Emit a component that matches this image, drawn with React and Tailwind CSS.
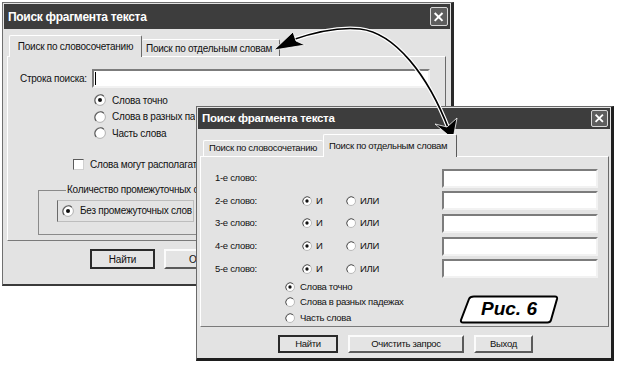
const FONT = { fontFamily: '"Liberation Sans", Arial, sans-serif' };

function Radio({ checked, s = 12 }) {
  return (
    <svg width={s} height={s} viewBox="0 0 12 12" className="shrink-0">
      <circle cx="6" cy="6" r="5.4" fill="#ffffff" stroke="#b0b0b0" strokeWidth="1" />
      <path d="M2.2 9.8 A5.4 5.4 0 0 1 9.8 2.2" fill="none" stroke="#5a5a5a" strokeWidth="1.2" />
      {checked && <circle cx="6" cy="6" r="2" fill="#111" />}
    </svg>
  );
}

function Close({ size }) {
  return (
    <div
      className={`${size} shrink-0 flex items-center justify-center border border-[#d8d8d8] bg-[#5e5e5e] rounded-[2px]`}
    >
      <svg viewBox="0 0 10 10" className="w-[70%] h-[70%]">
        <path d="M1.5 1.5 L8.5 8.5 M8.5 1.5 L1.5 8.5" stroke="#ffffff" strokeWidth="1.8" />
      </svg>
    </div>
  );
}

function Input({ className = "", children }) {
  return (
    <div
      className={`bg-white border-2 border-t-[#7c7c7c] border-l-[#7c7c7c] border-b-[#f2f2f2] border-r-[#f2f2f2] ${className}`}
    >
      {children}
    </div>
  );
}

function Btn({ children, def, className = "" }) {
  return (
    <div
      className={`flex items-center justify-center bg-[#e4e4e4] ${
        def
          ? "border-2 border-[#2a2a2a]"
          : "border-2 border-t-[#fbfbfb] border-l-[#fbfbfb] border-b-[#5a5a5a] border-r-[#5a5a5a]"
      } ${className}`}
    >
      {children}
    </div>
  );
}

function Dialog1() {
  return (
    <div
      className="absolute left-[2px] top-[2px] w-[452px] h-[284px] bg-[#e3e3e3] border border-[#707070] border-r-[3px] border-r-[#2a2a2a] border-b-[2px] border-b-[#3a3a3a] text-[10px] tracking-[-0.25px] text-[#111] overflow-hidden whitespace-nowrap"
      style={FONT}
    >
      <div className="mx-[1px] mt-[1px] h-[25px] bg-[#3d3d3d] flex items-center justify-between pl-[4px] pr-[2px]">
        <span className="text-white font-bold text-[12px] tracking-[-0.3px]">Поиск фрагмента текста</span>
        <Close size="w-[18px] h-[19px]" />
      </div>
      <div className="px-[4px] pt-[6px]">
        <div className="flex items-end h-[21px] pl-[2px]">
          <div className="relative z-10 h-[22px] w-[133px] -mb-[1px] bg-[#e3e3e3] border-t border-l border-white border-r border-r-[#6a6a6a] rounded-t-[2px] flex items-center justify-center">
            Поиск по словосочетанию
          </div>
          <div className="h-[17px] w-[138px] bg-[#e3e3e3] border-t border-white border-r border-r-[#6a6a6a] rounded-t-[2px] flex items-center pl-[4px]">
            Поиск по отдельным словам
          </div>
        </div>
        <div className="h-[185px] w-[439px] border border-t-white border-l-white border-b-[#7a7a7a] border-r-[#6a6a6a] flex flex-col">
          <div className="mt-[12px] h-[19px] flex items-center pl-[12px]">
            <span className="w-[72px]">Строка поиска:</span>
            <Input className="w-[338px] h-[19px] flex items-center pl-[1px]">
              <div className="w-[1px] h-[13px] bg-black" />
            </Input>
          </div>
          <div className="mt-[4px] flex flex-col pl-[86px]">
            {[["Слова точно", true], ["Слова в разных падежах", false], ["Часть слова", false]].map(
              ([t, c]) => (
                <div key={t} className="h-[16.5px] flex items-center gap-[6px]">
                  <Radio checked={c} s={12} />
                  <span className="w-[83px] overflow-hidden">{t}</span>
                </div>
              )
            )}
          </div>
          <div className="mt-[16px] h-[14px] flex items-center pl-[65px] gap-[6px]">
            <div className="w-[11px] h-[11px] bg-white border border-t-[#5a5a5a] border-l-[#5a5a5a] border-b-[#d0d0d0] border-r-[#d0d0d0]" />
            <span>Слова могут располагаться в любом порядке</span>
          </div>
          <div className="relative mt-[18px] ml-[30px] w-[392px] h-[45px] border border-[#8a8a8a]">
            <span className="absolute -top-[7px] left-[27px] bg-[#e3e3e3] px-[1px] leading-[12px]">
              Количество промежуточных слов
            </span>
            <div className="mt-[9px] ml-[18px] w-[137px] h-[22px] border border-t-[#bdbdbd] border-l-[#6a6a6a] border-b-[#bdbdbd] border-r-[#bdbdbd] flex items-center pl-[4px] gap-[6px]">
              <Radio checked s={12} />
              <span>Без промежуточных слов</span>
            </div>
          </div>
        </div>
        <div className="mt-[8px] flex pl-[83px] gap-[9px]">
          <Btn def className="w-[65px] h-[20px]">Найти</Btn>
          <Btn className="w-[34px] h-[20px] justify-start pl-[23px] overflow-hidden">Очистить запрос</Btn>
        </div>
      </div>
    </div>
  );
}

function Dialog2() {
  const rows = ["1-е слово:", "2-е слово:", "3-е слово:", "4-е слово:", "5-е слово:"];
  return (
    <div
      className="absolute left-[196px] top-[106px] w-[418px] h-[255px] bg-[#e3e3e3] border border-[#6a6a6a] border-r-[3px] border-r-[#1e1e1e] border-b-[3px] border-b-[#1e1e1e] text-[9.5px] tracking-[-0.3px] text-[#111] whitespace-nowrap"
      style={FONT}
    >
      <div className="mx-[1px] mt-[1px] h-[21px] bg-[#3d3d3d] flex items-center justify-between pl-[4px] pr-[2px]">
        <span className="text-white font-bold text-[11.5px] tracking-[-0.3px]">Поиск фрагмента текста</span>
        <Close size="w-[17px] h-[17px]" />
      </div>
      <div className="px-[3px] pt-[5px]">
        <div className="flex items-end h-[22px] pl-[3px]">
          <div className="h-[16px] w-[120px] bg-[#e3e3e3] border-t border-l border-white rounded-t-[2px] flex items-center pl-[5px]">
            Поиск по словосочетанию
          </div>
          <div className="relative z-10 h-[23px] w-[134px] -mb-[1px] bg-[#e3e3e3] border-t border-l border-white border-r border-r-[#5a5a5a] rounded-t-[2px] flex items-start pt-[4px] pl-[5px]">
            Поиск по отдельным словам
          </div>
        </div>
        <div className="h-[171px] w-[409px] border border-t-white border-l-white border-b-[#7a7a7a] border-r-[#6a6a6a] flex flex-col pt-[10px]">
          {rows.map((r, i) => (
            <div key={r} className="h-[22.6px] flex items-center pl-[14px]">
              <span className="w-[87px]">{r}</span>
              <div className="w-[140px] flex items-center">
                {i > 0 && (
                  <>
                    <div className="w-[44px] flex items-center gap-[4px]">
                      <Radio checked s={10} />
                      <span>И</span>
                    </div>
                    <div className="flex items-center gap-[4px]">
                      <Radio s={10} />
                      <span>ИЛИ</span>
                    </div>
                  </>
                )}
              </div>
              <Input className="w-[156px] h-[19px]" />
            </div>
          ))}
          <div className="flex flex-col pl-[84px] -mt-[1px]">
            {[["Слова точно", true], ["Слова в разных падежах", false], ["Часть слова", false]].map(
              ([t, c]) => (
                <div key={t} className="h-[15.5px] flex items-center gap-[5px]">
                  <Radio checked={c} s={10} />
                  <span>{t}</span>
                </div>
              )
            )}
          </div>
        </div>
        <div className="mt-[8px] flex pl-[78px] gap-[10px]">
          <Btn def className="w-[60px] h-[18px]">Найти</Btn>
          <Btn className="w-[116px] h-[18px]">Очистить запрос</Btn>
          <Btn className="w-[59px] h-[18px]">Выход</Btn>
        </div>
      </div>
    </div>
  );
}

function Arrow() {
  return (
    <svg className="absolute left-0 top-0 pointer-events-none" width="618" height="365" viewBox="0 0 618 365">
      <path
        d="M292 40 C318 31 340 27 360 29 C395 33 428 75 449 130"
        fill="none"
        stroke="#ffffff"
        strokeWidth="4"
      />
      <path
        d="M292 40 C318 31 340 27 360 29 C395 33 428 75 449 130"
        fill="none"
        stroke="#000000"
        strokeWidth="1.6"
      />
      <polygon points="274,50 293,32 296,41 305,45" fill="#000" stroke="#fff" strokeWidth="0.8" />
      <polygon points="453,139 435,124 447,127 457,118" fill="#000" stroke="#fff" strokeWidth="0.8" />
    </svg>
  );
}

function Label() {
  return (
    <div className="absolute left-[459px] top-[295px] w-[100px] h-[29px]">
      <svg className="absolute inset-0" width="100" height="29" viewBox="0 0 100 29">
        <path
          d="M15 1.5 L96 1.5 Q98.5 1.5 98 4 L92 25 Q91.3 27.5 88.5 27.5 L4 27.5 Q1.5 27.5 2 25 L10 4 Q11 1.5 15 1.5 Z"
          fill="#ffffff"
          stroke="#000"
          strokeWidth="2"
        />
      </svg>
      <div
        className="absolute inset-0 flex items-center justify-center font-bold italic text-[19px] text-black"
        style={{ fontFamily: '"Liberation Sans", Arial, sans-serif' }}
      >
        Рис. 6
      </div>
    </div>
  );
}

export default function App() {
  return (
    <div className="relative w-[618px] h-[365px] bg-white overflow-hidden">
      <Dialog1 />
      <Dialog2 />
      <Arrow />
      <Label />
    </div>
  );
}
